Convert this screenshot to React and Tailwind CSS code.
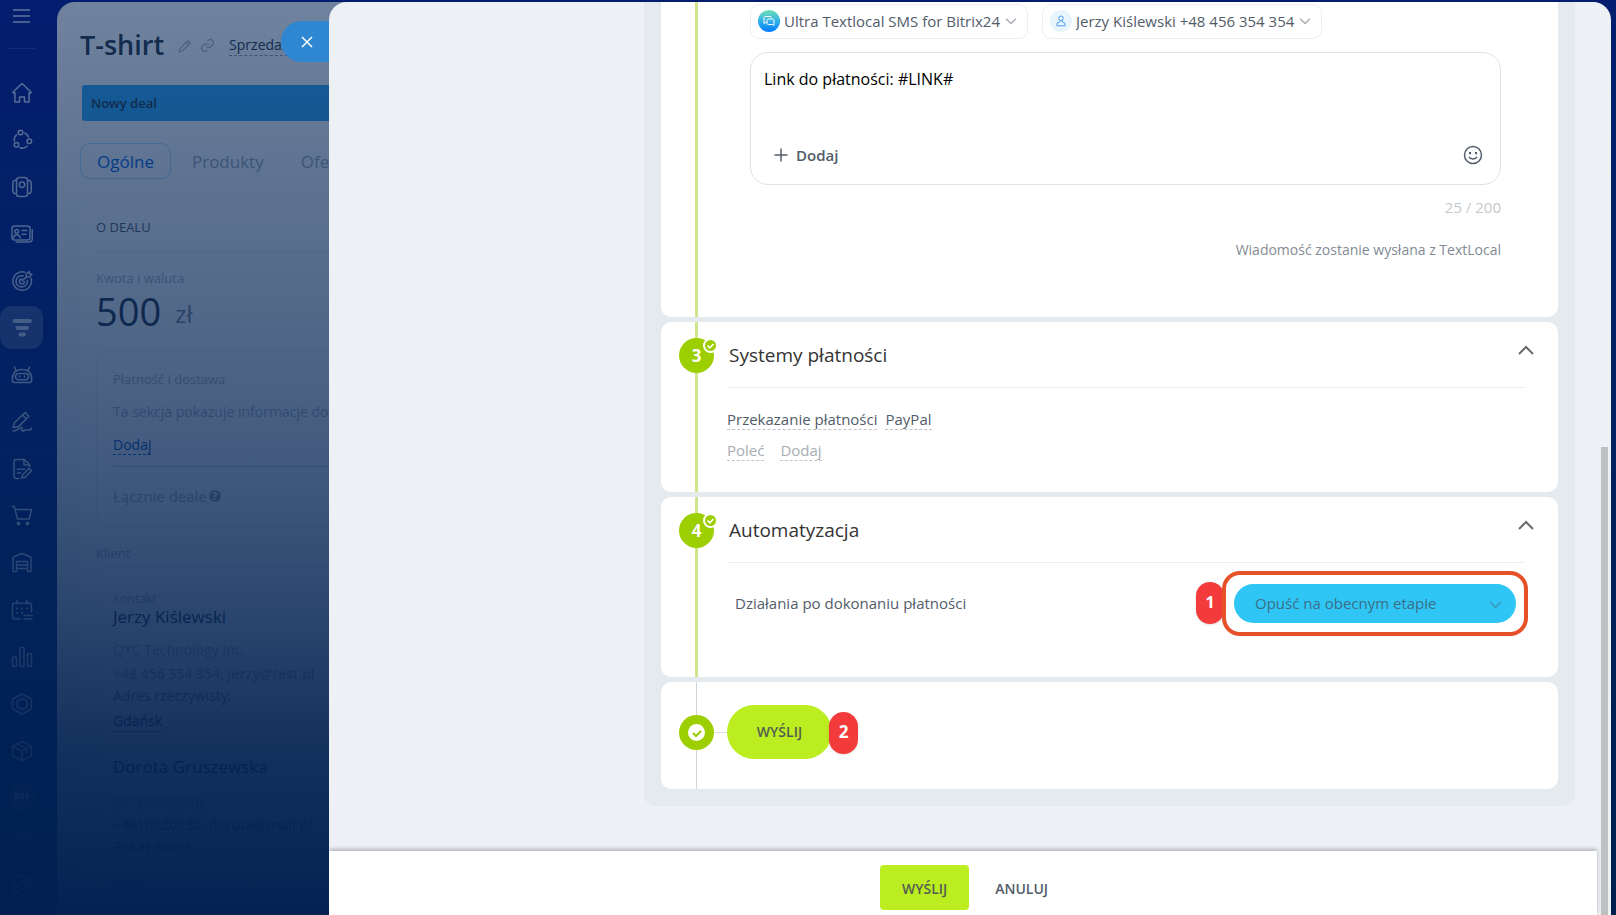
import { useState } from "react";

const iconProps = {
  width: 22,
  height: 22,
  viewBox: '0 0 22 22',
  fill: 'none',
  stroke: 'currentColor',
  strokeWidth: 1.5,
  strokeLinecap: 'round',
  strokeLinejoin: 'round',
  'aria-hidden': true
}

const menuItems = [
  { name: 'Strona', icon: <svg {...iconProps}><path d="M11 1.5 1.8 10.2l1.1 1.1 1-.6V20h4.6v-5h5v5h4.600v-9.300l1 .6 1.100-1.100z" /></svg> },
  { name: 'Procesy', icon: <svg {...iconProps}><circle cx="9.500" cy="3.500" r="2.300" /><circle cx="18.300" cy="12.300" r="2.300" /><circle cx="5.500" cy="15.800" r="2.300" /><path d="M5.500 5.700a8 8 0 0 0-2.300 6.300M13.800 4a8 8 0 0 1 3.700 4M9 18.700c2.500.9 5.300.4 7.300-1.700" /></svg> },
  { name: 'Grupy', icon: <svg {...iconProps}><rect x="5.500" y="1.500" width="11" height="19" rx="2.800" /><circle cx="11" cy="8.800" r="2.700" /><path d="M5.300 4.300c-2.500 0-3.500 1-3.500 3.200v7c0 2.200 1 3.200 3.500 3.200M16.700 4.300c2.500 0 3.500 1 3.500 3.200v7c0 2.200-1 3.200-3.500 3.200" /></svg> },
  { name: 'Kontakty', icon: <svg {...iconProps}><rect x="1" y="3" width="18" height="14" rx="2.500" /><circle cx="5.700" cy="8.300" r="1.900" /><path d="M2.500 14.800c.6-4.200 6-4.200 6.800 0M11 7.500h5M11 11.300h4M21.300 6.500v8.800c0 2.500-1 3.700-3.500 3.700H5" /></svg> },
  { name: 'Marketing', icon: <svg {...iconProps}><path d="M14 2.200a9.300 9.300 0 1 0 6 6M12 5.800a5.700 5.700 0 1 0 4.300 4.500M11 8.900a2.500 2.500 0 1 0 2.500 2.800M11.300 11l4-4.200V4l3-2.500.3 2.300 2.300.4-2.700 2.800h-2.500" /></svg> },
  { name: 'CRM', active: true, icon: <svg {...iconProps} strokeWidth="4"><path d="M3.500 4h15.500M6.500 11h9.500M9.500 17.500h3.500" /></svg> },
  { name: 'Robot', icon: <svg {...iconProps}><path d="M3.500 3 5 6.700M18.500 3 17 6.700M3.500 18.500h15c1.500 0 2.200-1 2.200-3C20.700 9 17 5.500 11 5.500S1.300 9 1.300 15.500c0 2 .7 3 2.200 3z" /><rect x="4.500" y="9.500" width="13" height="6.300" rx="3" /><path d="M8.500 12v1M13.500 12v1" /></svg> },
  { name: 'Podpis', icon: <svg {...iconProps}><path d="m2 16.500 1.500-4.700L14 1.500l4 3.700L7.500 15.600zM11.500 4l3.800 3.800M2 20c4 0 6.500-3.500 8.500-3.500 1.500 0-.5 3.500 1 3.500s2.500-1.500 5-1.200c2.500.3 4 .2 4-2" /></svg> },
  { name: 'Dokumenty', icon: <svg {...iconProps}><path d="M8 20.500H5.300c-1.500 0-2.300-.8-2.300-2.300V3.800c0-1.500.8-2.300 2.300-2.300h8.200l5 5v2M13 2v5h5M6.500 11.200h7M6.500 15h3M10.800 20l.8-3.300 6.400-6.400 2.500 2.300-6.500 6.600z" /></svg> },
  { name: 'Sklep', icon: <svg {...iconProps}><path d="M1 1.500h2.300L6.500 14h11.700l2.300-9.500H4.200" /><circle cx="7.500" cy="18.500" r="1.200" fill="currentColor" /><circle cx="16.500" cy="18.500" r="1.200" fill="currentColor" /></svg> },
  { name: 'Magazyn', icon: <svg {...iconProps}><path d="M2 19.500V6.500c0-1 .4-1.600 1.300-2L11 1.500l7.700 3c.9.400 1.300 1 1.300 2v13h-3.500V9.500h-11v10zM5.500 13h11M5.500 16.500h11" /></svg> },
  { name: 'Rezerwacje', icon: <svg {...iconProps}><path d="M9 20H4c-1.500 0-2.500-1-2.500-2.500v-11C1.500 5 2.500 4 4 4h14c1.500 0 2.500 1 2.500 2.500V13M6 1.500V5M16 1.500V5M13 16.500h8.500M13 20h8.500" /><path strokeWidth="2" d="M6 9.500h.1M11 9.500h.1M16 9.500h.1M6 14h.1M11 14h.1" /></svg> },
  { name: 'Analityka', icon: <svg {...iconProps}><rect x="1.500" y="11" width="4" height="9.500" rx="1.200" /><rect x="9" y="1.500" width="4" height="19" rx="1.200" /><rect x="16.500" y="7.500" width="4" height="13" rx="1.200" /></svg> },
  { name: 'Automatyzacja', icon: <svg {...iconProps}><path d="m11 1 8.500 4.500c.5.3 1 1 1 1.700v7.600c0 .7-.5 1.400-1 1.700L11 21l-8.500-4.500c-.5-.3-1-1-1-1.700V7.200c0-.7.5-1.400 1-1.700zM11 5.500 16 8v6l-5 2.500L6 14V8z" /></svg> },
  { name: 'Aplikacje', icon: <svg {...iconProps}><path d="m11 1.500 9.500 4.700v9.600L11 20.500l-9.500-4.700V6.200zM1.500 6.200 11 11l9.500-4.800M11 11v9.500M6 3.900l9.700 4.800v4" /></svg> },
  { name: 'PH', icon: <span className="flex size-7 items-center justify-center rounded-full bg-white/15 text-[11px] font-bold">PH</span> }
]

const channels = [
  { id: 'channel', label: 'Kanał', value: 'Ultra Textlocal SMS for Bitrix24' },
  { id: 'recipient', label: 'Odbiorca', value: 'Jerzy Kiślewski +48 456 354 354' }
]

function Chevron({ className, up }) {
  return (
    <svg className={className} viewBox="0 0 16 10" fill="none" stroke="currentColor" strokeWidth="2" aria-hidden="true">
      <path d={up ? 'M1 9l7-7 7 7' : 'M1 1l7 7 7-7'} />
    </svg>
  )
}

function Check({ className }) {
  return (
    <svg className={className} viewBox="0 0 12 12" fill="none" stroke="currentColor" strokeWidth="2.200" aria-hidden="true">
      <path d="M2 6l3 3 5-5" />
    </svg>
  )
}

function Sidebar() {
  return (
    <nav className="flex w-[57px] shrink-0 flex-col text-[#cdd7f5]">
      <button className="flex h-8 w-[43px] items-center justify-center" aria-label="Menu">
        <svg width="17" height="14" viewBox="0 0 17 14" stroke="currentColor" strokeWidth="1.500" aria-hidden="true">
          <path d="M0 1h17M0 7h17M0 13h17" />
        </svg>
      </button>
      <div className="mx-2 mt-4 mb-5 w-[27px] border-t border-white/15"></div>
      {menuItems.map((item) => (
        <a key={item.name} href="#" aria-label={item.name} className="flex h-[47px] w-[43px] shrink-0 items-center">
          <span className={item.active ? 'flex size-[43px] items-center justify-center rounded-xl bg-white/25' : 'flex size-[43px] items-center justify-center'}>
            {item.icon}
          </span>
        </a>
      ))}
      <div className="mx-2 mt-2 h-3 w-7 shrink-0 rounded-t-full bg-white/15"></div>
      <a href="#" aria-label="Ustawienia" className="mt-5 flex h-[47px] w-[43px] items-center justify-center">
        <svg {...iconProps}>
          <circle cx="11" cy="11" r="4" />
          <path d="M9.300 1.500h3.400l.7 2.500 2.500-1 2.600 2.600-1.300 2.400 3 1.300v3.400l-3 1.200 1.300 2.500-2.600 2.500-2.500-1.200-.7 2.800H9.300l-.9-2.800-2.300 1.200-2.600-2.500 1.200-2.500-3-1.200V9.300L4.700 8 3.500 5.600 6.100 3l2.300 1z" />
        </svg>
      </a>
    </nav>
  )
}

function Deal() {
  return (
    <section className="mt-[2px] mr-5 min-w-0 flex-1 overflow-hidden whitespace-nowrap rounded-tl-[18px] bg-[#eef2f6] pl-[23px] text-[#a9b1bd]">
      <div className="flex h-[83px] items-center pt-1">
        <h1 className="text-[27px] font-semibold text-[#2b3849]">T-shirt</h1>
        <svg className="ml-[14px]" width="14" height="14" viewBox="0 0 14 14" fill="none" stroke="currentColor" strokeWidth="1.200" aria-hidden="true">
          <path d="M1 13l1-3.500L10 1.500l2.500 2.500-8 8zM8.500 3l2.500 2.500" />
        </svg>
        <svg className="ml-2" width="15" height="15" viewBox="0 0 24 24" fill="none" stroke="currentColor" strokeWidth="2" aria-hidden="true">
          <path d="M10 13a5 5 0 0 0 7.500.5l3-3a5 5 0 0 0-7-7L12 5M14 11a5 5 0 0 0-7.500-.5l-3 3a5 5 0 0 0 7 7L12 19" />
        </svg>
        <a href="#" className="ml-[14px] border-b border-dashed border-[#8b95a1] text-sm leading-5 text-[#2b3849]">Sprzedaż</a>
      </div>
      <div className="ml-[2px] flex h-9 items-center rounded-l-[3px] bg-[#2fa5f0] px-[9px] pt-[2px] text-[13px] font-semibold text-[#2b3849]">Nowy deal</div>
      <div className="mt-[22px] flex items-center gap-[5px] text-[17px]">
        <button className="h-9 rounded-[10px] border border-[#a9d4f6] px-4 pt-px text-[#0b66d8]">Ogólne</button>
        <button className="h-9 px-4 pt-px text-[#98a2ae]">Produkty</button>
        <button className="h-9 px-4 pt-px text-[#98a2ae]">Oferty</button>
      </div>
      <div className="mt-[23px] rounded-tl-xl bg-white/30 pl-4">
        <h2 className="flex h-[51px] items-center border-b border-[#dfe4ea] pt-[2px] text-[13px] font-medium text-[#525c69]">O DEALU</h2>
        <p className="mt-[15px] text-[13px] leading-5">Kwota i waluta</p>
        <p className="flex h-[62px] items-start text-[38px] leading-[46px] text-[#2b3849]">500<span className="ml-[14px] text-2xl leading-[52px] text-[#7d8896]">zł</span></p>
        <div className="h-[177px] rounded-l-xl border border-r-0 border-[#e6eaef] bg-white/20 pl-4">
          <p className="pt-[18px] text-[13px] leading-5">Płatność i dostawa</p>
          <p className="mt-[13px] text-sm leading-5">Ta sekcja pokazuje informacje dotyczące płatności</p>
          <a href="#" className="mt-[14px] inline-block border-b border-dashed border-[#0b66d8] text-sm leading-[18px] text-[#0b58b8]">Dodaj</a>
          <div className="mt-[10px] border-t border-[#c5ccd5]"></div>
          <p className="mt-[19px] flex items-center gap-[2px] text-[15px] leading-5">
            Łącznie deale
            <span className="flex size-3 items-center justify-center rounded-full bg-[#98a2ae] text-[10px] font-bold text-white">?</span>
          </p>
        </div>
        <p className="mt-4 text-[13px] leading-5">Klient</p>
        <div className="mt-[3px] rounded-tl-xl border border-r-0 border-[#e6eaef] bg-white/20 pl-4 text-sm leading-[22px]">
          <p className="mt-6 text-xs leading-4 font-medium">Kontakt</p>
          <p className="text-[17px] leading-5 text-[#2b3849]">Jerzy Kiślewski</p>
          <p className="mt-3">QYC Technology Inc.</p>
          <p className="mt-[2px] font-semibold">+48 456 354 354, jerzy@test.pl</p>
          <p className="text-[#7d8896]">Adres rzeczywisty:</p>
          <a href="#" className="mt-1 inline-block border-b border-dotted border-[#2b3849] leading-5 text-[#2b3849]">Gdańsk</a>
          <p className="mt-6 text-[17px] text-[#2b3849]">Dorota Gruszewska</p>
          <p className="mt-3">JerzyCompany</p>
          <p className="mt-[2px] font-semibold text-[#7d8896]">+4810020030, dorota@mail.pl</p>
          <p className="text-[#525c69]">Pokaż adres</p>
          <p className="mt-5 text-xs">Firma</p>
          <p>JerzyCompany</p>
        </div>
      </div>
    </section>
  )
}

function Step({ number, title, children }) {
  return (
    <section className="flex rounded-[10px] bg-white">
      <div className="relative flex w-[66px] shrink-0 justify-start pl-[18px] pt-4">
        <div className="absolute inset-y-0 left-[34px] w-[3px] bg-[#cfe58a]"></div>
        <div className="relative flex size-[35px] items-center justify-center rounded-full bg-[#9dcf00] text-[17px] font-bold text-white">
          {number}
          <span className="absolute top-0 -right-1 flex size-[15px] items-center justify-center rounded-full border-2 border-white bg-[#9dcf00]">
            <Check className="size-[9px]" />
          </span>
        </div>
      </div>
      <div className="mr-[25px] flex-1">
        <div className="mr-2 flex h-[66px] items-center justify-between border-b border-[#edeef0]">
          <h2 className="pt-px pl-[2px] text-[19px] leading-7 text-[#333]">{title}</h2>
          <button className="-mr-[9px] mb-[10px] text-[#6b6b6b]" aria-label={`Zwiń: ${title}`}>
            <Chevron up className="h-[10px] w-4" />
          </button>
        </div>
        {children}
      </div>
    </section>
  )
}

function Message() {
  const [text, setText] = useState('Link do płatności: #LINK#')

  return (
    <section className="relative h-[315px] rounded-b-[10px] bg-white pt-[2px] pr-[57px] pl-[89px]">
      <div className="absolute inset-y-0 left-[34px] w-[3px] bg-[#cfe58a]"></div>
      <div className="flex gap-[14px]">
        {channels.map(({ id, label, value }) => (
          <label key={id} className="flex h-[35px] items-center rounded-[9px] border border-[#edeef0] pr-[10px] pb-px pl-[7px] text-[#525c69]">
            {
              id === 'channel' ? (
                <span className="flex size-[22px] items-center justify-center rounded-full bg-linear-to-b from-[#70e0b0] via-[#30b0e8] to-[#0878ff] text-white">
                  <svg width="12" height="12" viewBox="0 0 12 12" fill="none" stroke="currentColor" aria-hidden="true">
                    <path d="M4 7.500H2.500L1 8.500V3c0-1 .5-1.500 1.500-1.500H7c1 0 1.500.5 1.500 1.500M5.500 4h4c1 0 1.500.5 1.500 1.500v5L9.500 9.500h-4C4.500 9.500 4 9 4 8V5.500C4 4.500 4.500 4 5.500 4z" />
                  </svg>
                </span>
              ) : (
                <span className="flex size-[22px] items-center justify-center rounded-full bg-[#e8f5fd] text-[#4a9ff0]">
                  <svg width="12" height="12" viewBox="0 0 12 12" fill="none" stroke="currentColor" aria-hidden="true">
                    <circle cx="6" cy="3.300" r="2.300" />
                    <path d="M4.800 5.500v1.300L2 8.300v2.500h8V8.300L7.200 6.800V5.500" />
                  </svg>
                </span>
              )
            }
            <select aria-label={label} className="ml-1 appearance-none bg-transparent text-[15px] leading-5 outline-none">
              <option>{value}</option>
            </select>
            <Chevron className="ml-1 h-[7px] w-3 text-[#a8adb4]" />
          </label>
        ))}
      </div>
      <div className="mt-[13px] flex h-[133px] flex-col rounded-[18px] border border-[#dfe0e3] px-[13px]">
        <textarea
          aria-label="Wiadomość"
          className="mt-[14px] h-[58px] resize-none text-base leading-6 text-black outline-none"
          value={text}
          onChange={(e) => setText(e.target.value)}
        />
        <div className="flex items-center justify-between px-1 pt-[18px] text-[#525c69]">
          <button className="flex items-center gap-2 pl-[6px] text-[15px] leading-6 font-semibold">
            <svg width="14" height="14" viewBox="0 0 14 14" stroke="currentColor" strokeWidth="1.500" aria-hidden="true">
              <path d="M7 .5v13M.5 7h13" />
            </svg>
            Dodaj
          </button>
          <button aria-label="Emoji">
            <svg width="20" height="20" viewBox="0 0 20 20" fill="none" stroke="currentColor" strokeWidth="1.500" aria-hidden="true">
              <circle cx="10" cy="10" r="8.500" />
              <path d="M6 11.800c1.500 2.800 6.500 2.800 8 0" />
              <path strokeWidth="2" d="M7 7v2.200M13 7v2.200" />
            </svg>
          </button>
        </div>
      </div>
      <p className="mt-[10px] text-right text-[15px] leading-6 text-[#c5c9ce]">{text.length} / 200</p>
      <p className="mt-[19px] text-right text-sm leading-6 text-[#828b95]">Wiadomość zostanie wysłana z TextLocal</p>
    </section>
  )
}

function SlideOver() {
  return (
    <div className="absolute top-[2px] right-[5px] bottom-0 left-[329px]">
      <button className="absolute top-[19px] -left-12 flex h-[41px] w-12 items-center rounded-l-full bg-[#2f87d2] pl-5 text-white" aria-label="Zamknij">
        <svg width="12" height="12" viewBox="0 0 12 12" stroke="currentColor" strokeWidth="1.500" aria-hidden="true">
          <path d="M1 1l10 10M11 1L1 11" />
        </svg>
      </button>
      <div className="relative flex h-full flex-col overflow-hidden rounded-t-[18px] bg-[#edf1f5]">
        <main className="min-h-0 flex-1 overflow-hidden pr-9 pl-[315px]">
          <div className="flex flex-col gap-[5px] rounded-b-[12px] bg-[#e5eaee] px-[17px] pb-[17px]">
            <Message />
            <Step number="3" title="Systemy płatności">
              <div className="flex gap-2 pt-[21px] text-[15px] leading-5 text-[#525c69]">
                <a href="#" className="border-b border-dashed border-[#c0c4ca]">Przekazanie płatności</a>
                <a href="#" className="border-b border-dashed border-[#c0c4ca]">PayPal</a>
              </div>
              <div className="mt-[10px] flex gap-4 pb-[31px] text-[15px] leading-5 text-[#a8adb4]">
                <a href="#" className="border-b border-dashed border-[#c0c4ca]">Poleć</a>
                <a href="#" className="border-b border-dashed border-[#c0c4ca]">Dodaj</a>
              </div>
            </Step>
            <Step number="4" title="Automatyzacja">
              <div className="flex items-center justify-between pt-2 pb-[41px] pl-2">
                <label htmlFor="stage" className="pb-px text-[15px] leading-6 text-[#525c69]">Działania po dokonaniu płatności</label>
                <div className="mr-[5px] flex items-center">
                  <span className="mb-[2px] -mr-[2px] flex h-[42px] w-7 items-center justify-center rounded-full bg-[#f33b3c] pb-[2px] text-base font-bold text-white shadow-sm">1</span>
                  <div className="relative rounded-[18px] border-4 border-[#e65128] px-2 py-[9px]">
                    <select id="stage" className="h-[39px] w-[282px] appearance-none rounded-full bg-[#2fc6f6] pr-10 pl-[21px] text-[15px] text-[#3c6e86]">
                      <option>Opuść na obecnym etapie</option>
                    </select>
                    <Chevron className="pointer-events-none absolute top-[26px] right-[22px] h-2 w-[13px] text-[#3a98bb]" />
                  </div>
                </div>
              </div>
            </Step>
            <section className="relative flex h-[107px] items-center rounded-[10px] bg-white pl-[18px]">
              <div className="absolute inset-y-0 left-[35px] w-px bg-[#d0d5d9]"></div>
              <div className="relative mb-[6px] flex size-[35px] items-center justify-center rounded-full bg-[#9dcf00]">
                <span className="flex size-[17px] items-center justify-center rounded-full bg-white text-[#9dcf00]">
                  <Check className="size-3" />
                </span>
              </div>
              <div className="mb-[6px] h-px w-[13px] bg-[#dfe0e3]"></div>
              <button className="mb-2 h-[54px] w-[105px] rounded-full bg-[#bbed21] text-sm font-semibold text-[#535c50]">WYŚLIJ</button>
              <span className="relative mb-[6px] -ml-[3px] flex h-[42px] w-[29px] items-center justify-center rounded-full bg-[#f33b3c] pb-[2px] text-[17px] font-bold text-white shadow-sm">2</span>
            </section>
          </div>
        </main>
        <div className="absolute top-[445px] right-[3px] bottom-0 w-[7px] bg-[#bdc1c1]"></div>
        <footer className="mr-[14px] flex h-16 items-center justify-center gap-[10px] bg-white pt-2 pl-[18px] text-sm font-semibold shadow-[0_-2px_4px_rgba(0,0,0,0.25)]">
          <button className="h-[45px] rounded bg-[#bbed21] px-[22px] pt-1 text-[#535c50]">WYŚLIJ</button>
          <button className="h-[45px] px-4 pt-1 text-[#525c69]">ANULUJ</button>
        </footer>
      </div>
    </div>
  )
}

function App() {
  return (
    <div className="relative flex h-screen overflow-hidden bg-linear-to-b from-[#081a92] to-[#042c80] font-['Open_Sans','Noto_Sans',sans-serif]">
      <Sidebar />
      <Deal />
      {/* Dimmed backdrop */}
      <div className="absolute inset-0 bg-[linear-gradient(180deg,rgba(0,32,80,0.53)_0%,rgba(0,32,80,0.66)_33%,rgba(0,32,80,0.73)_50%,rgba(0,32,80,0.82)_66%,rgba(0,32,80,0.92)_82%,rgba(0,32,80,0.99)_100%)]"></div>
      <SlideOver />
    </div>
  )
}
export default App
